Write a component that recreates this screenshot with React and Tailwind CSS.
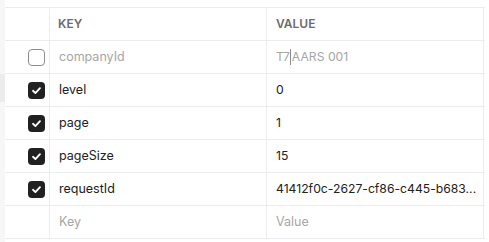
import React from 'react'

const righe = [
  { chiave: 'companyId', valore: 'T7', valore2: 'AARS 001', attivo: false },
  { chiave: 'level', valore: '0', attivo: true },
  { chiave: 'page', valore: '1', attivo: true },
  { chiave: 'pageSize', valore: '15', attivo: true },
  { chiave: 'requestId', valore: '41412f0c-2627-cf86-c445-b683...', attivo: true },
]

function Casella({ attivo }) {
  if (!attivo) {
    return <div className="w-[17px] h-[17px] rounded-[4px] border border-[#8c8c8c] bg-white" />
  }
  return (
    <div className="w-[17px] h-[17px] rounded-[4px] bg-[#212121] flex items-center justify-center">
      <svg width="11" height="11" viewBox="0 0 12 12" fill="none">
        <path d="M2.2 6.3 4.8 8.8 9.8 3.4" stroke="#fff" strokeWidth="2" strokeLinecap="round" strokeLinejoin="round" />
      </svg>
    </div>
  )
}

export default function App() {
  return (
    <div className="w-[489px] h-[242px] bg-white flex text-[12.5px]" style={{ fontFamily: 'Inter, "Liberation Sans", sans-serif' }}>
      {/* striscia laterale */}
      <div className="w-[5px] bg-[#f7f7f7] flex flex-col">
        <div className="h-[74px]" />
        <div className="h-[28px] bg-[#ececec]" />
      </div>

      <div className="w-[480px] flex flex-col">
        <div className="h-[8px] border-b border-[#ececec]" />
        {/* header */}
        <div className="flex h-[33px] border-b border-[#ececec] text-[12px] font-semibold text-[#6b6b6b]">
          <div className="w-[45px] border-r border-[#ececec]" />
          <div className="w-[217px] border-r border-[#ececec] pl-[8px] flex items-center">KEY</div>
          <div className="w-[217px] border-r border-[#ececec] pl-[9px] flex items-center">VALUE</div>
        </div>

        {righe.map(r => (
          <div key={r.chiave} className="flex h-[33px] border-b border-[#ececec]">
            <div className="w-[45px] border-r border-[#ececec] flex items-center justify-end pr-[4px]">
              <Casella attivo={r.attivo} />
            </div>
            <div className={`w-[217px] border-r border-[#ececec] pl-[9px] flex items-center ${r.attivo ? 'text-[#212121]' : 'text-[#a6a6a6]'}`}>
              {r.chiave}
            </div>
            <div className={`w-[217px] border-r border-[#ececec] pl-[9px] flex items-center whitespace-nowrap text-[12.2px] ${r.attivo ? 'text-[#212121]' : 'text-[#a6a6a6]'}`}>
              {r.valore}
              {r.valore2 && (
                <>
                  <span className="inline-block w-px h-[16px] bg-[#8c8c8c] mx-[0.5px]" />
                  {r.valore2}
                </>
              )}
            </div>
          </div>
        ))}

        {/* riga vuota */}
        <div className="flex h-[33px] border-b border-[#ececec] text-[#a6a6a6]">
          <div className="w-[45px] border-r border-[#ececec]" />
          <div className="w-[217px] border-r border-[#ececec] pl-[9px] flex items-center">Key</div>
          <div className="w-[217px] border-r border-[#ececec] pl-[9px] flex items-center">Value</div>
        </div>
      </div>
    </div>
  )
}
